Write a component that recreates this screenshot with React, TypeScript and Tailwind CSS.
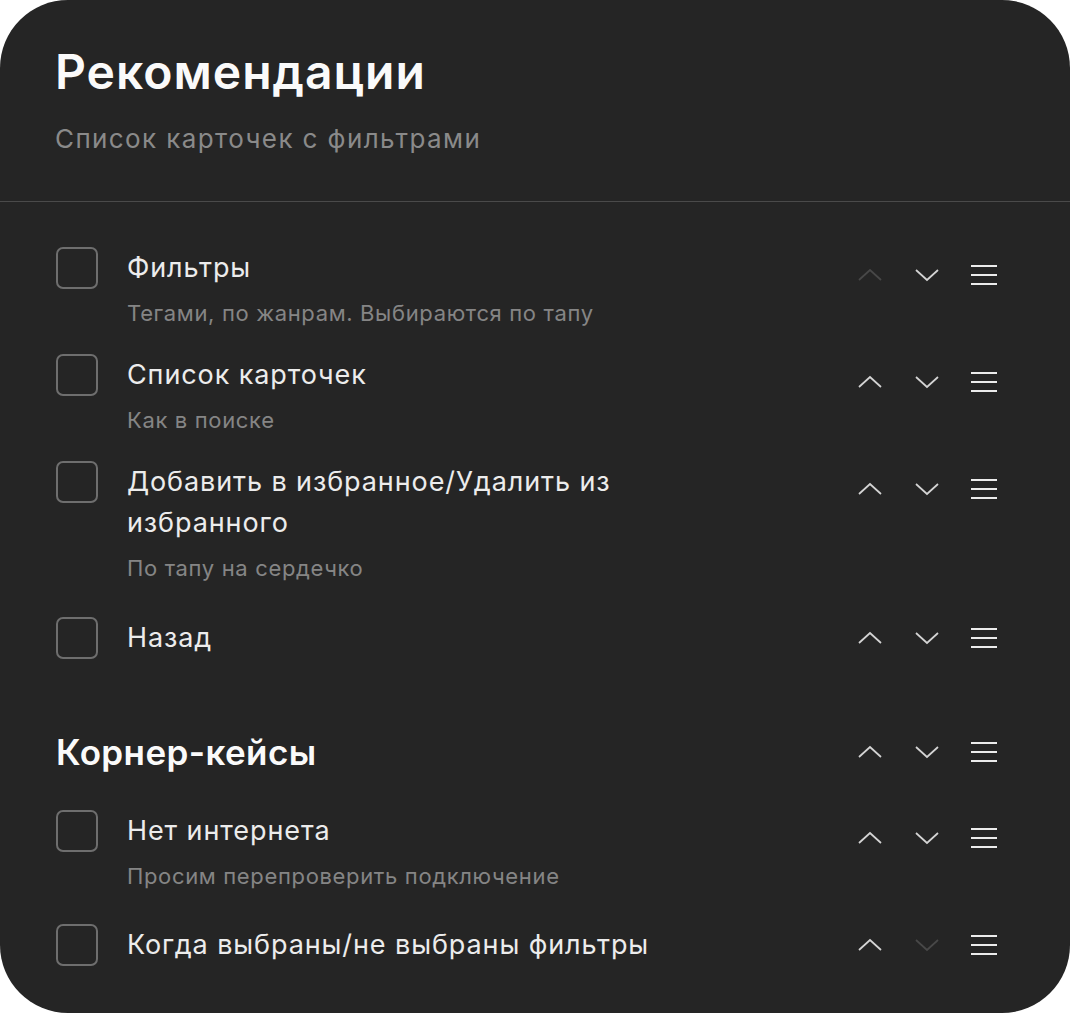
const ROWS = [
  {
    title: "Фильтры",
    desc: "Тегами, по жанрам. Выбираются по тапу",
    upDisabled: true,
    className: "mt-[45px]",
  },
  {
    title: "Список карточек",
    desc: "Как в поиске",
    className: "mt-[26px]",
  },
  {
    title: "Добавить в избранное/Удалить из избранного",
    desc: "По тапу на сердечко",
    className: "mt-[26px]",
  },
  {
    title: "Назад",
    className: "mt-[34px]",
  },
];

const CORNER_ROWS = [
  {
    title: "Нет интернета",
    desc: "Просим перепроверить подключение",
    className: "mt-[37px]",
  },
  {
    title: "Когда выбраны/не выбраны фильтры",
    downDisabled: true,
    className: "mt-[33px]",
  },
];

function Controls({
  upDisabled,
  downDisabled,
  className = "",
}: {
  upDisabled?: boolean;
  downDisabled?: boolean;
  className?: string;
}) {
  return (
    <div className={`flex shrink-0 items-center gap-[25px] ${className}`}>
      <svg
        viewBox="0 0 32 24"
        className={`h-6 w-8 ${upDisabled ? "text-[#484848]" : "text-[#d4d4d4]"}`}
        fill="none"
      >
        <path d="M5 17L16 7L27 17" stroke="currentColor" strokeWidth="1.75" />
      </svg>
      <svg
        viewBox="0 0 32 24"
        className={`h-6 w-8 ${downDisabled ? "text-[#484848]" : "text-[#d4d4d4]"}`}
        fill="none"
      >
        <path d="M5 7L16 17L27 7" stroke="currentColor" strokeWidth="1.75" />
      </svg>
      <svg viewBox="0 0 32 24" className="h-6 w-8 text-[#ececec]" fill="none">
        <path d="M3 3H29M3 12H29M3 21H29" stroke="currentColor" strokeWidth="2" />
      </svg>
    </div>
  );
}

function Row({
  title,
  desc,
  upDisabled,
  downDisabled,
  className = "",
}: {
  title: string;
  desc?: string;
  upDisabled?: boolean;
  downDisabled?: boolean;
  className?: string;
}) {
  return (
    <div className={`flex items-start justify-between ${className}`}>
      <div className="flex items-start gap-[29px]">
        <div className="h-[42px] w-[42px] shrink-0 rounded-[7px] border-2 border-[#6e6e6e]" />
        <div className="max-w-[580px]">
          <div className="text-[27px] leading-[41px] tracking-[0.9px] text-[#ececec]">
            {title}
          </div>
          {desc && (
            <div className="mt-[10px] text-[22px] leading-[30px] tracking-[0.65px] text-[#858585]">
              {desc}
            </div>
          )}
        </div>
      </div>
      <Controls
        upDisabled={upDisabled}
        downDisabled={downDisabled}
        className={desc ? "mt-[16px]" : "mt-[9px]"}
      />
    </div>
  );
}

export default function App() {
  return (
    <div className="min-h-screen bg-white font-['Inter',sans-serif]">
      <div className="h-[1013px] w-[1070px] overflow-hidden rounded-[68px] bg-[#252525]">
        <header className="border-b border-[#4a4a4a] px-[55px] pt-[44px] pb-[46px]">
          <h1 className="text-[48px] leading-[56px] font-semibold tracking-[1px] text-[#fafafa]">
            Рекомендации
          </h1>
          <p className="mt-[23px] text-[26px] leading-[32px] tracking-[1.4px] text-[#8a8a8a]">
            Список карточек с фильтрами
          </p>
        </header>

        <div className="flex flex-col pr-[70px] pl-[56px]">
          {ROWS.map((row) => (
            <Row key={row.title} {...row} />
          ))}

          <div className="mt-[72px] flex items-center justify-between">
            <h2 className="text-[35px] leading-[42px] font-semibold tracking-[0.4px] text-[#fafafa]">
              Корнер-кейсы
            </h2>
            <Controls />
          </div>

          {CORNER_ROWS.map((row) => (
            <Row key={row.title} {...row} />
          ))}
        </div>
      </div>
    </div>
  );
}
